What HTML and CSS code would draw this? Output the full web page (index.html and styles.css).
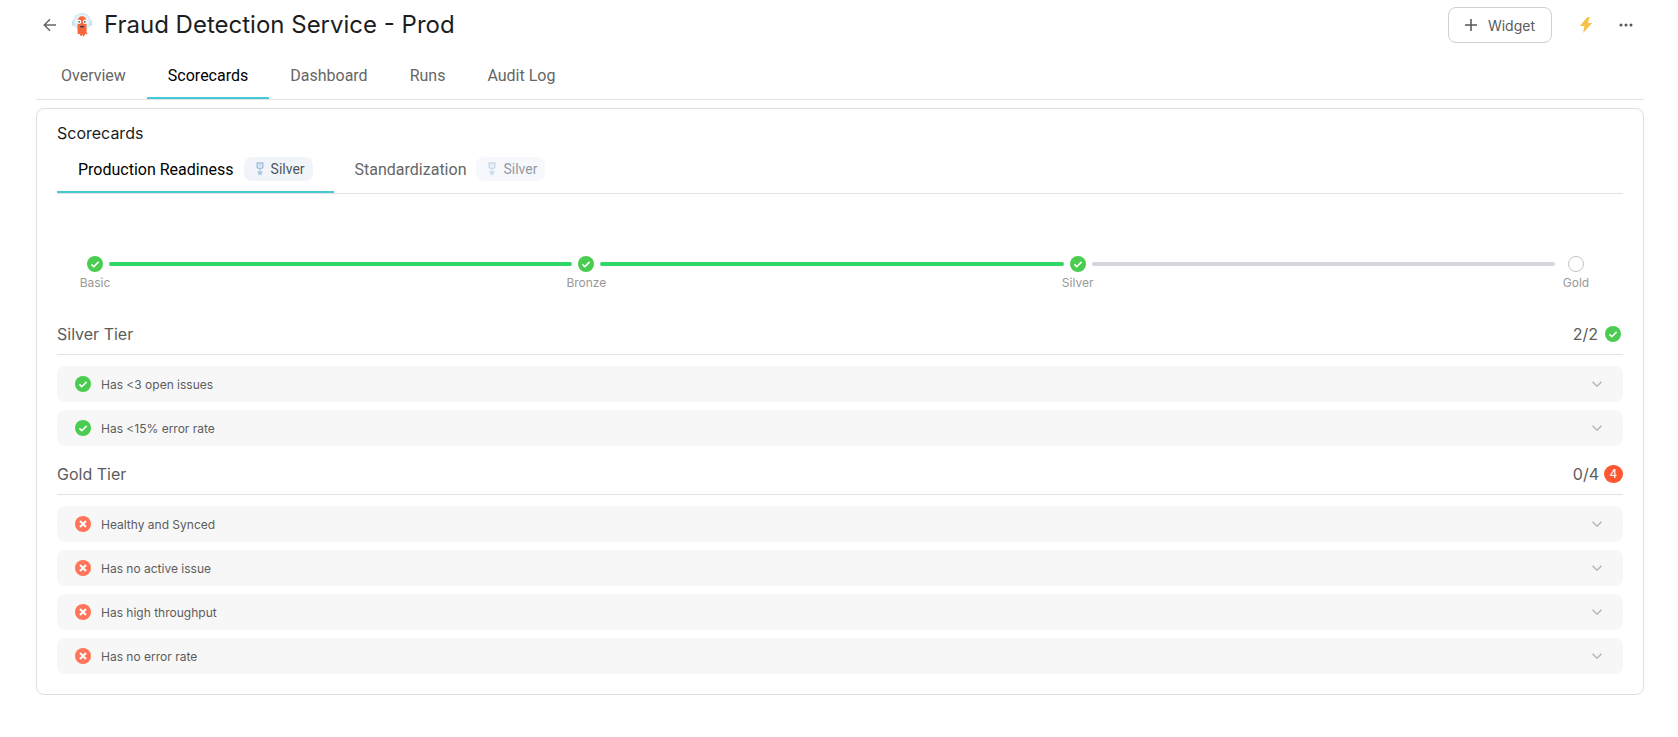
FILE: index.html
```html
<!DOCTYPE html>
<html lang="en">
<head>
  <meta charset="UTF-8" />
  <meta name="viewport" content="width=device-width, initial-scale=1.0"/>
  <title>Fraud Detection Service - Prod</title>
  <link rel="stylesheet" href="styles.css">
</head>
<body>
  <!-- shared icons -->
  <svg class="sprite" aria-hidden="true">
    <symbol id="check" viewBox="0 0 16 16">
      <circle cx="8" cy="8" r="8" fill="#49cc4f"/>
      <path d="M4.4 8.4l2.4 2.3 4.8-4.8" fill="none" stroke="#fff" stroke-width="1.6"/>
    </symbol>
    <symbol id="cross" viewBox="0 0 16 16">
      <circle cx="8" cy="8" r="8" fill="#ff755a"/>
      <path d="M5 5l6 6M11 5l-6 6" fill="none" stroke="#fff" stroke-width="2"/>
    </symbol>
    <symbol id="chevron" viewBox="0 0 12 12">
      <path d="M1.5 3.7L6 8.2l4.5-4.5" fill="none" stroke="#b9b9b9" stroke-width="1.6"/>
    </symbol>
    <symbol id="medal" viewBox="0 0 10 14">
      <path d="M2.2 1v4.6L5 7l2.8-1.4V1z" fill="#e3edf6" stroke="#a5c3df" stroke-width="1.5"/>
      <path d="M5 1v4" stroke="#b9d0e6" stroke-width="1"/>
      <path d="M5 7.5l.9 2.1 2.3.1-1.8 1.5.6 2.3-2-1.3-2 1.3.6-2.3-1.8-1.5 2.3-.1z" fill="#a5c3df"/>
    </symbol>
  </svg>

  <header class="topbar">
    <button class="icon-btn" aria-label="Back">
      <svg width="14" height="14" viewBox="0 0 14 14" fill="none" stroke="#666" stroke-width="1.5"><path d="M13 7H1.5M7 1.2L1.3 7 7 12.8"/></svg>
    </button>
    <svg class="logo" width="20" height="26" viewBox="0 0 20 26" aria-hidden="true">
      <rect x="0" y="8" width="3" height="6" rx="1.5" fill="#c3dfec"/>
      <rect x="17" y="8" width="3" height="6" rx="1.5" fill="#c3dfec"/>
      <circle cx="10" cy="9.5" r="8.8" fill="#d5eaf4"/>
      <circle cx="10" cy="9.5" r="7" fill="#e8f4fa"/>
      <path d="M5.5 9c0-6.500 9-6.500 9 0v10c0 1 .3 2 1 3-1.300.6-2 .2-2.300-.5-.2 1-.5 2-1.200 3-.9-.4-1.200-1.200-1.400-2-.3.900-.7 1.500-1.500 1.800-.8-.6-1-1.600-1.100-2.600-.5.500-1.200.7-2 .4-.5-1-.5-2-.5-3.100z" fill="#f4683c"/>
      <circle cx="6.9" cy="9.8" r="2.3" fill="#fff"/>
      <circle cx="13.1" cy="9.8" r="2.3" fill="#fff"/>
      <circle cx="7.1" cy="9.9" r=".8" fill="#333"/>
      <circle cx="12.9" cy="9.9" r=".8" fill="#333"/>
      <path d="M7.8 14h4.4c-.3 2.2-4 2.2-4.4 0z" fill="#2c4152"/>
    </svg>
    <h1>Fraud Detection Service - Prod</h1>
    <div class="actions">
      <button class="widget-btn">
        <svg width="12" height="12" viewBox="0 0 12 12" stroke="#555" stroke-width="1.5"><path d="M6 0v12M0 6h12"/></svg>
        Widget
      </button>
      <button class="icon-btn" aria-label="Actions">
        <svg width="14" height="18" viewBox="0 0 14 18"><path d="M8.5 1L.8 10h4.700L4 17l9.200-10H8.800l1.900-6z" fill="#f7c145"/></svg>
      </button>
      <button class="icon-btn" aria-label="More">
        <svg width="14" height="14" viewBox="0 0 14 14" fill="#555"><circle cx="2" cy="7" r="1.5"/><circle cx="7" cy="7" r="1.5"/><circle cx="12" cy="7" r="1.5"/></svg>
      </button>
    </div>
  </header>

  <nav class="tabs page-tabs">
    <a href="#" class="tab">Overview</a>
    <a href="#" class="tab active">Scorecards</a>
    <a href="#" class="tab">Dashboard</a>
    <a href="#" class="tab">Runs</a>
    <a href="#" class="tab">Audit Log</a>
  </nav>

  <main class="panel">
    <h2>Scorecards</h2>
    <nav class="tabs card-tabs">
      <a href="#" class="tab active">Production Readiness
        <span class="badge"><svg width="10" height="14"><use href="#medal"/></svg>Silver</span>
      </a>
      <a href="#" class="tab">Standardization
        <span class="badge faded"><svg width="10" height="14"><use href="#medal"/></svg>Silver</span>
      </a>
    </nav>

    <div class="stepper">
      <div class="step"><svg width="16" height="16"><use href="#check"/></svg><span>Basic</span></div>
      <div class="line done"></div>
      <div class="step"><svg width="16" height="16"><use href="#check"/></svg><span>Bronze</span></div>
      <div class="line done"></div>
      <div class="step"><svg width="16" height="16"><use href="#check"/></svg><span>Silver</span></div>
      <div class="line"></div>
      <div class="step last"><i class="ring"></i><span>Gold</span></div>
    </div>

    <section class="tier">
      <div class="tier-head">
        <h3>Silver Tier</h3>
        <span class="score">2/2</span>
        <svg class="tier-check" width="16" height="16"><use href="#check"/></svg>
      </div>
      <button class="rule"><svg width="16" height="16"><use href="#check"/></svg><span>Has &lt;3 open issues</span><svg width="12" height="12"><use href="#chevron"/></svg></button>
      <button class="rule"><svg width="16" height="16"><use href="#check"/></svg><span>Has &lt;15% error rate</span><svg width="12" height="12"><use href="#chevron"/></svg></button>
    </section>

    <section class="tier">
      <div class="tier-head">
        <h3>Gold Tier</h3>
        <span class="score">0/4</span>
        <span class="count">4</span>
      </div>
      <button class="rule"><svg width="16" height="16"><use href="#cross"/></svg><span>Healthy and Synced</span><svg width="12" height="12"><use href="#chevron"/></svg></button>
      <button class="rule"><svg width="16" height="16"><use href="#cross"/></svg><span>Has no active issue</span><svg width="12" height="12"><use href="#chevron"/></svg></button>
      <button class="rule"><svg width="16" height="16"><use href="#cross"/></svg><span>Has high throughput</span><svg width="12" height="12"><use href="#chevron"/></svg></button>
      <button class="rule"><svg width="16" height="16"><use href="#cross"/></svg><span>Has no error rate</span><svg width="12" height="12"><use href="#chevron"/></svg></button>
    </section>
  </main>
</body>
</html>
```

FILE: styles.css
```css
* {
  box-sizing: border-box;
}

body {
  margin: 0;
  padding: 0 34px 42px 36px;
  background: #fff;
  color: #5c5c5c;
  font-family: Inter, "Liberation Sans", sans-serif;
}

svg {
  display: block;
  flex: none;
}

.sprite {
  position: absolute;
  width: 0;
  height: 0;
}

h1, h2, h3 {
  margin: 0;
  font-weight: 400;
}

button {
  font: inherit;
  color: inherit;
  border: none;
  background: none;
  cursor: pointer;
}

.topbar {
  display: flex;
  align-items: center;
  height: 50px;
  padding: 0 4px 0 0;
}

.icon-btn {
  display: flex;
  align-items: center;
  justify-content: center;
  width: 28px;
  height: 28px;
  padding: 0;
}

.logo {
  margin: 0 12px 0 8px;
}

h1 {
  font-size: 24px;
  line-height: 32px;
  color: #1c1d1f;
}

.actions {
  display: flex;
  align-items: center;
  gap: 12px;
  margin-left: auto;
}

.widget-btn {
  display: flex;
  align-items: center;
  gap: 11px;
  height: 36px;
  margin-right: 8px;
  padding: 0 16px;
  border: 1px solid #d0d0d2;
  border-radius: 8px;
  font-size: 14px;
}

.tabs {
  display: flex;
  border-bottom: 1px solid #e2e2e3;
}

.tab {
  display: flex;
  align-items: center;
  gap: 10px;
  padding: 0 21px;
  border-bottom: 2px solid transparent;
  font-family: Roboto, Inter, sans-serif;
  font-size: 16px;
  color: #666;
  text-decoration: none;
}

.tab.active {
  color: #000;
  border-bottom-color: #45c8d8;
}

.page-tabs {
  height: 50px;
  padding-left: 4px;
}

.page-tabs .tab {
  padding-top: 4px;
}

.card-tabs {
  height: 49px;
}

.card-tabs .tab {
  padding-top: 2px;
}

.badge {
  display: flex;
  align-items: center;
  gap: 6px;
  height: 24px;
  padding: 0 8px 0 11px;
  border-radius: 8px;
  background: #f1f5f9;
  color: #4b5563;
  font-size: 14px;
}

.badge.faded {
  opacity: 0.6;
}

.panel {
  margin-top: 8px;
  padding: 12px 20px 20px;
  border: 1px solid #e0e0e1;
  border-radius: 8px;
}

h2 {
  font-size: 16px;
  line-height: 24px;
  color: #1c1d1f;
}

.stepper {
  display: flex;
  align-items: flex-start;
  gap: 6px;
  padding: 62px 32px 0 30px;
}

/* label is wider than the marker and spills out evenly on both sides */
.step {
  display: flex;
  flex-direction: column;
  align-items: center;
  gap: 3px;
  width: 16px;
  font-size: 12px;
  line-height: 16px;
  color: #999;
  white-space: nowrap;
}

.step.last {
  width: 30px;
}

.ring {
  width: 16px;
  height: 16px;
  border: 1px solid #c4c4c4;
  border-radius: 50%;
}

.line {
  flex: 1;
  height: 4px;
  margin-top: 6px;
  border-radius: 2px;
  background: #d3d4dc;
}

.line.done {
  background: #2fd566;
}

.tier {
  display: flex;
  flex-direction: column;
  gap: 8px;
}

.stepper + .tier {
  margin-top: 24px;
}

.tier-head {
  display: flex;
  align-items: center;
  height: 40px;
  margin-bottom: 3px;
  padding-bottom: 2px;
  border-bottom: 1px solid #e2e2e3;
}

.tier + .tier {
  margin-top: 9px;
}

h3, .score {
  font-size: 16px;
  line-height: 24px;
}

.score {
  margin-left: auto;
}

.tier-check {
  margin: 0 2px 0 7px;
}

.count {
  margin-left: 5px;
  width: 19px;
  height: 18px;
  border-radius: 9px;
  background: #fd5831;
  color: #fff;
  font-size: 12px;
  line-height: 18px;
  text-align: center;
}

.rule {
  display: flex;
  align-items: center;
  gap: 10px;
  height: 36px;
  padding: 0 20px 0 18px;
  border-radius: 8px;
  background: #f7f7f7;
  font-size: 12px;
}

.rule span {
  flex: 1;
  text-align: left;
}
```
